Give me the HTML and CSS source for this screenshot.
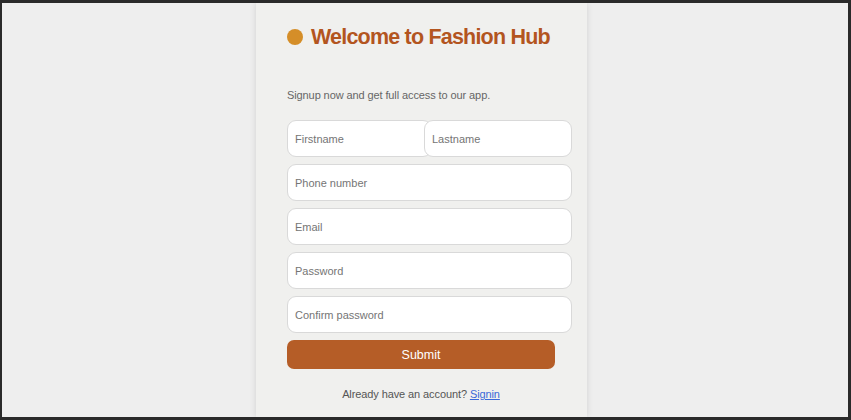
FILE: index.html
```html
<!DOCTYPE html>
<html>
<head>
<meta charset="utf-8">
<link rel="stylesheet" href="styles.css">
</head>
<body>
<div class="frame">
  <div class="card">
    <h1 class="title"><span class="dot"></span>Welcome to Fashion Hub</h1>
    <p class="lead">Signup now and get full access to our app.</p>
    <form class="form">
      <div class="row-names">
        <input class="field first" placeholder="Firstname">
        <input class="field last" placeholder="Lastname">
      </div>
      <input class="field" placeholder="Phone number">
      <input class="field" placeholder="Email">
      <input class="field" placeholder="Password">
      <input class="field" placeholder="Confirm password">
      <button type="button" class="submit">Submit</button>
    </form>
    <p class="signin">Already have an account? <a href="#">Signin</a></p>
  </div>
</div>
</body>
</html>
```
FILE: styles.css
```css
html, body { margin: 0; padding: 0; }
body {
  background: #2a2a2a;
  height: 420px;
  overflow: hidden;
  font-family: "Liberation Sans", Arial, sans-serif;
}
.frame {
  margin: 3px 3px 0 2px;
  height: 414px;
  background: #eeeeee;
  padding-left: 254px;
  overflow: hidden;
}
.card {
  width: 331px;
  height: 414px;
  background: #f0f0ee;
  box-shadow: 0 0 6px rgba(0,0,0,0.12);
  box-sizing: border-box;
  padding: 21px 15px 0 31px;
}
.title {
  margin: 0;
  display: flex;
  align-items: center;
  gap: 8px;
  white-space: nowrap;
  font-size: 21.5px;
  letter-spacing: -0.8px;
  font-weight: bold;
  color: #b3551f;
  line-height: 26px;
}
.dot {
  flex: none;
  width: 16px;
  height: 16px;
  border-radius: 50%;
  background: #d58e28;
}
.lead {
  margin: 38px 0 0;
  font-size: 11px;
  letter-spacing: -0.1px;
  color: #666;
  line-height: 15px;
}
.form {
  margin-top: 17px;
  display: flex;
  flex-direction: column;
  gap: 7px;
}
.row-names { display: flex; }
.field {
  box-sizing: border-box;
  height: 37px;
  width: 285px;
  border: 1px solid #d9d9d9;
  border-radius: 9px;
  background: #fff;
  padding: 0 7px;
  font-family: "Liberation Sans", Arial, sans-serif;
  font-size: 11px;
  color: #333;
  outline: none;
}
.field::placeholder { color: #757575; }
.first { width: 145px; }
.last { width: 148px; margin-left: -8px; position: relative; }
.submit {
  width: 268px;
  height: 29px;
  border: none;
  border-radius: 7px;
  background: #b55d27;
  color: #fff;
  font-family: "Liberation Sans", Arial, sans-serif;
  font-size: 12.5px;
}
.signin {
  margin: 18px 0 0;
  width: 268px;
  text-align: center;
  font-size: 11px;
  letter-spacing: -0.1px;
  line-height: 14px;
  color: #555;
}
.signin a { color: #3a68d8; }
```
